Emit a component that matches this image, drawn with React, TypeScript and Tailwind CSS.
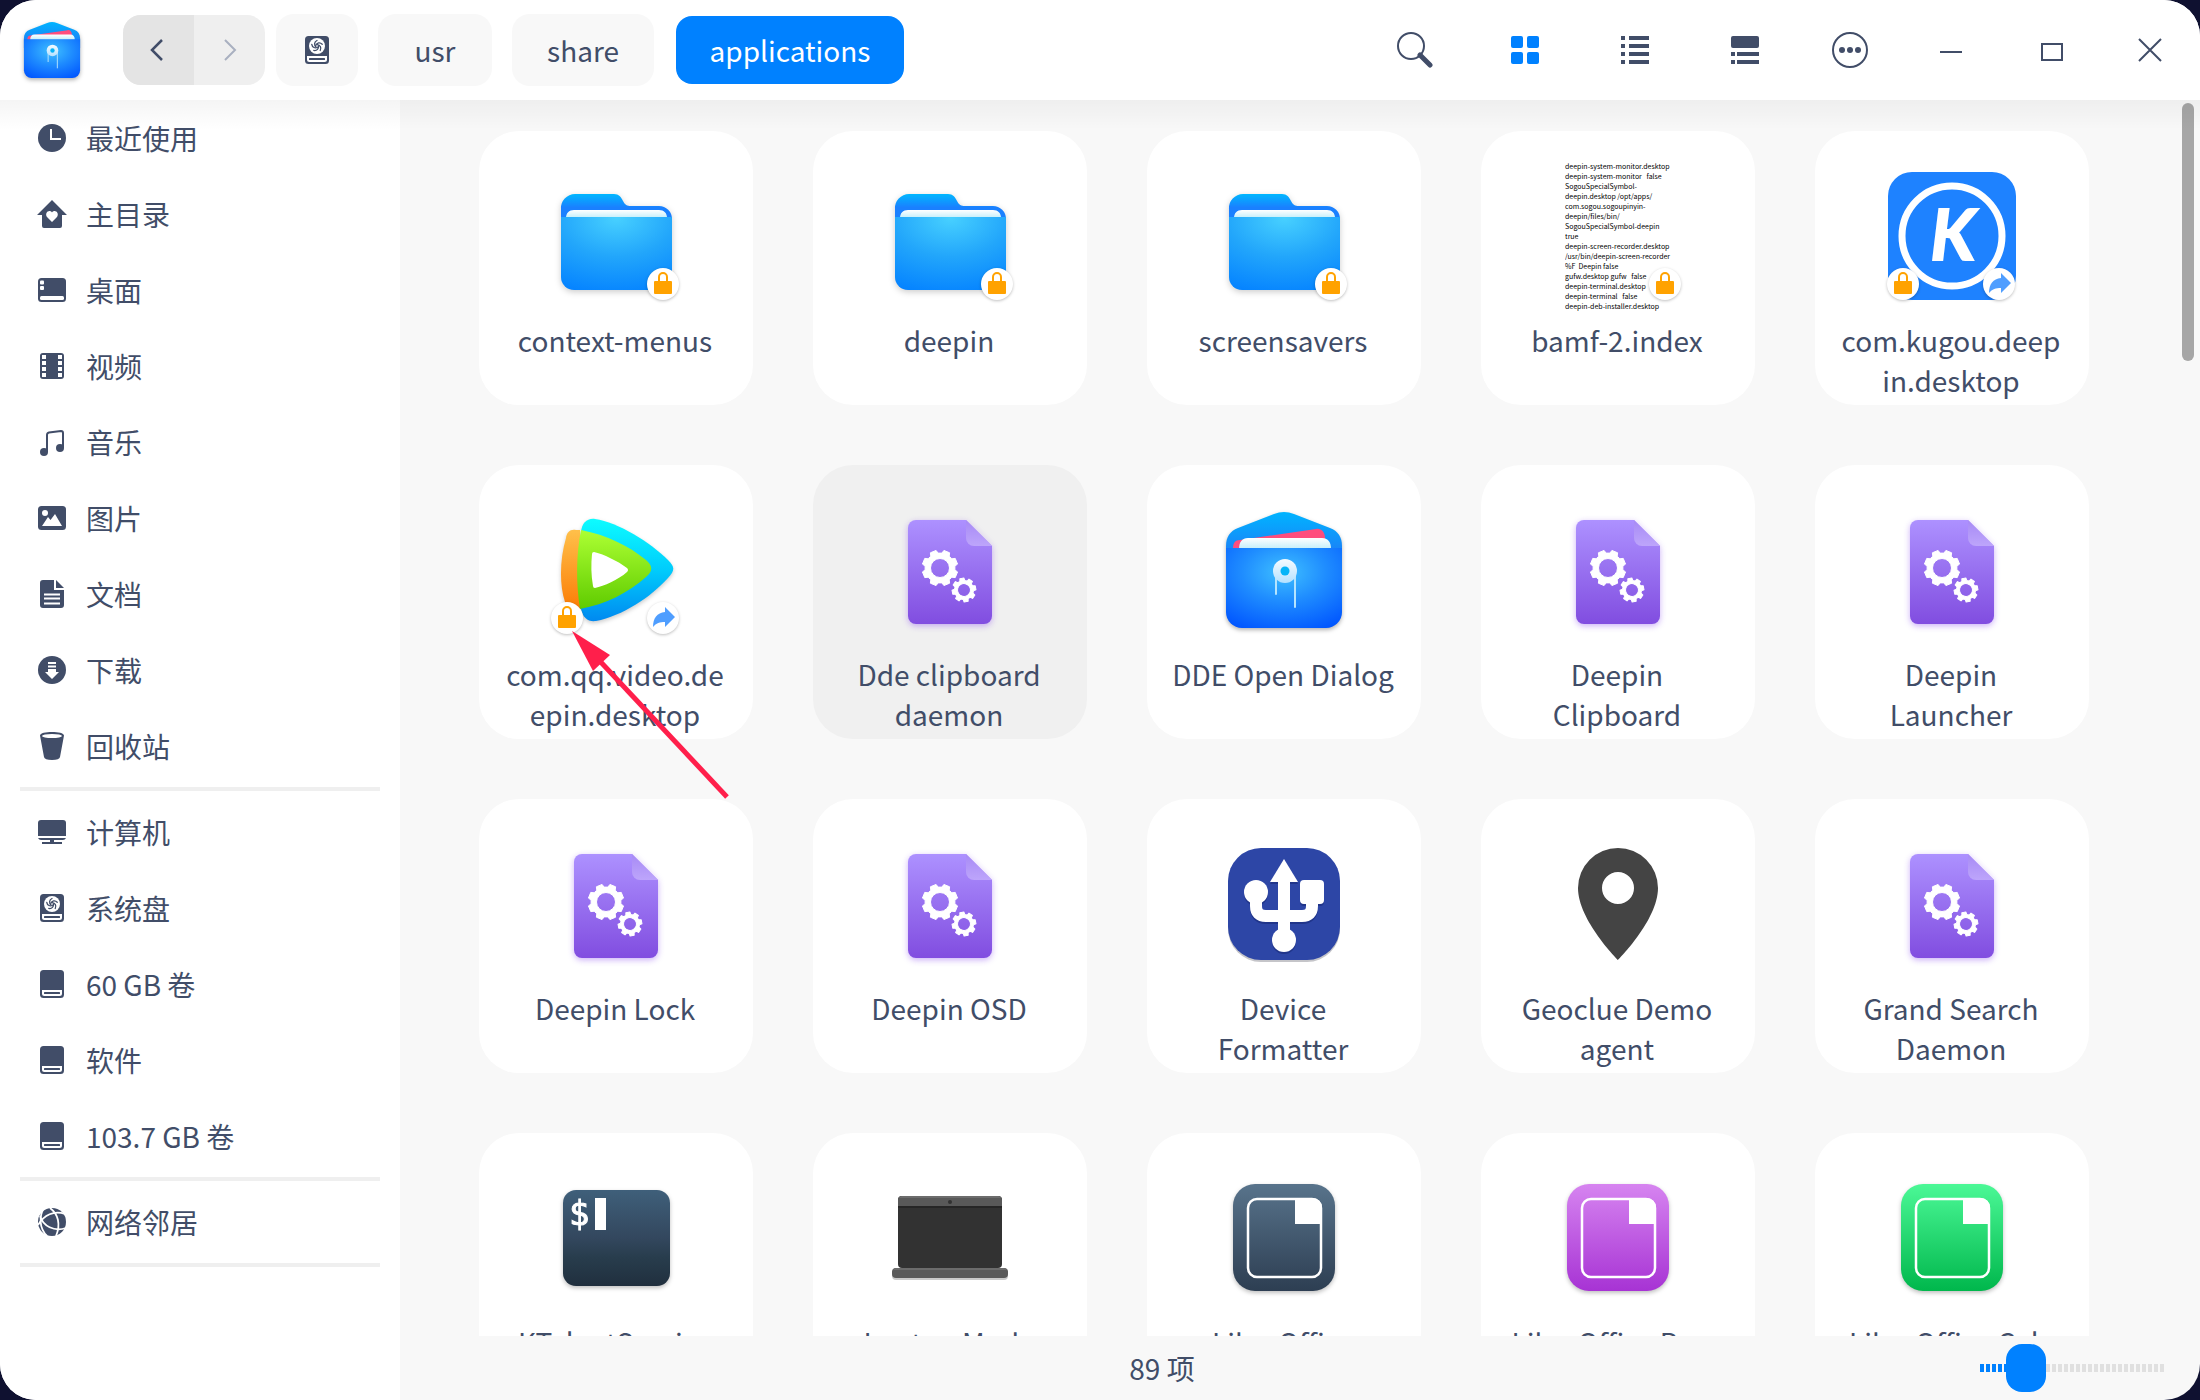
import React, { useState } from "react";

const INK = "#414d68";

/* ---------- shared gradients ---------- */

function Gradient({ id, stops }: { id: string; stops: [number, string][] }) {
  return (
    <linearGradient id={id} x1="0" y1="0" x2="0" y2="1">
      {stops.map(([o, c]) => (
        <stop key={o} offset={o} stopColor={c} />
      ))}
    </linearGradient>
  );
}

function Gradients() {
  return (
    <svg width="0" height="0" className="absolute" aria-hidden="true">
      <defs>
        <Gradient id="folderBack" stops={[[0, "#00b7ff"], [0.3, "#1a80ff"], [1, "#1a80ff"]]} />
        <radialGradient id="folderFront" cx="0.5" cy="0.02" r="1.05">
          <stop offset="0" stopColor="#47d0ff" />
          <stop offset="0.5" stopColor="#22a6fb" />
          <stop offset="1" stopColor="#0583ff" />
        </radialGradient>
        <Gradient id="paper" stops={[[0, "#ffffff"], [1, "#c2eefa"]]} />
        <Gradient id="flap" stops={[[0, "#00b4ff"], [1, "#2470f5"]]} />
        <radialGradient id="pouch" cx="0.5" cy="0.3" r="0.8">
          <stop offset="0" stopColor="#3fc0ff" />
          <stop offset="0.45" stopColor="#1f8dff" />
          <stop offset="1" stopColor="#0055ff" />
        </radialGradient>
        <Gradient id="button" stops={[[0, "#f5fbff"], [1, "#b5e1ff"]]} />
        <Gradient id="violet" stops={[[0, "#ad91ff"], [1, "#814de0"]]} />
        <Gradient id="fold" stops={[[0, "#a78af5"], [1, "#bda5fb"]]} />
        <Gradient id="qqCyan" stops={[[0, "#0dfcff"], [0.5, "#00ccfc"], [1, "#0089f0"]]} />
        <Gradient id="qqGreen" stops={[[0, "#adff33"], [1, "#5fcb00"]]} />
        <Gradient id="qqOrange" stops={[[0, "#ffc04a"], [1, "#fb7c06"]]} />
        <Gradient id="shell" stops={[[0, "#3f5f7a"], [0.5, "#33475e"], [0.7, "#283d4d"], [1, "#202f3e"]]} />
        <Gradient id="officeSlate" stops={[[0, "#58738b"], [1, "#2d3e52"]]} />
        <Gradient id="officePurple" stops={[[0, "#d684f0"], [1, "#a733d4"]]} />
        <Gradient id="officeGreen" stops={[[0, "#4bf896"], [1, "#00b74c"]]} />
      </defs>
    </svg>
  );
}

/* ---------- file icons (128 x 128) ---------- */

function Art({ children, className = "size-32" }: { children: React.ReactNode; className?: string }) {
  return (
    <svg viewBox="0 0 128 128" className={`${className} overflow-visible`} aria-hidden="true">
      {children}
    </svg>
  );
}

function FolderIcon() {
  return (
    <Art className="size-32 drop-shadow-[0_2px_3px_rgba(0,0,0,0.2)]">
      <path d="M9 60V37a14 14 0 0 1 14-15h39c5 0 7 3 9 7s4 5 8 5h28a13 13 0 0 1 13 13v20z" fill="url(#folderBack)" />
      <path d="M14 46c0-5 3-8 8-8h85c5 0 8 3 8 8z" fill="url(#paper)" />
      <path d="M9 45h111v60a13 13 0 0 1-13 13H22a13 13 0 0 1-13-13z" fill="url(#folderFront)" />
    </Art>
  );
}

function PouchIcon({ className = "size-32" }: { className?: string }) {
  return (
    <Art className={`${className} drop-shadow-[0_2px_2px_rgba(0,0,0,0.3)]`}>
      <path d="M6 60V40c0-9 4-15 12-18L54 8q10-4 20 0l36 14c8 3 12 9 12 18v20z" fill="url(#flap)" />
      <path d="M13 43c0-6 2-9 7-9l76-11c5-1 9 3 9 9v11z" fill="#ff4d7d" />
      <path d="M19 43c0-7 3-11 9-11h74c6 0 9 4 9 11z" fill="url(#paper)" />
      <path d="M6 42h116v64a16 16 0 0 1-16 16H22a16 16 0 0 1-16-16z" fill="url(#pouch)" />
      <path d="M56 66v22M75 66v35" stroke="#b5e4ff" strokeWidth="2" strokeLinecap="round" />
      <circle cx="65" cy="65" r="12" fill="url(#button)" />
      <circle cx="65" cy="65" r="4.5" fill="#06b4f8" />
    </Art>
  );
}

function gearPath(cx: number, cy: number, outer: number, root: number, hole: number, teeth: number) {
  const step = (Math.PI * 2) / teeth;
  const at = (r: number, a: number) => `${(cx + r * Math.cos(a)).toFixed(2)} ${(cy + r * Math.sin(a)).toFixed(2)}`;
  let d = "";
  for (let i = 0; i < teeth; i++) {
    const a = i * step + step / 2 - Math.PI / 2;
    d += `${i ? "L" : "M"}${at(root, a - step * 0.34)}L${at(outer, a - step * 0.22)}L${at(outer, a + step * 0.22)}L${at(root, a + step * 0.34)}`;
  }
  return `${d}ZM${cx - hole} ${cy}a${hole} ${hole} 0 1 0 ${hole * 2} 0a${hole} ${hole} 0 1 0 ${-hole * 2} 0Z`;
}

function GearFileIcon() {
  return (
    <Art className="size-32 drop-shadow-[0_2px_3px_rgba(140,80,240,0.45)]">
      <path d="M30 14h50l26 26v70a8 8 0 0 1-8 8H30a8 8 0 0 1-8-8V22a8 8 0 0 1 8-8z" fill="url(#violet)" />
      <path d="M80 14l26 26H88a8 8 0 0 1-8-8z" fill="url(#fold)" />
      <g fill="#fff" stroke="#fff" strokeWidth="1" strokeLinejoin="round" fillRule="evenodd">
        <path d={gearPath(54, 62, 18, 15, 9.5, 8)} />
        <path d={gearPath(78, 84, 12, 9.5, 6.5, 8)} transform="rotate(12 78 84)" />
      </g>
    </Art>
  );
}

function KugouIcon() {
  return (
    <Art>
      <rect width="128" height="128" rx="24" fill="#1e82ff" />
      <circle cx="64" cy="64" r="50" fill="none" stroke="#fff" strokeWidth="7" />
      <text x="65" y="88" textAnchor="middle" fill="#fff" stroke="#fff" strokeWidth="2" fontSize="70" fontWeight="700" fontStyle="italic" fontFamily="Lato, sans-serif">
        K
      </text>
    </Art>
  );
}

function QQVideoIcon() {
  return (
    <Art className="size-32 drop-shadow-[0_2px_2px_rgba(0,0,0,0.2)]">
      <path d="M24 24c-6-1-9 2-10 8-6 20-7 46-1 64 2 8 6 9 15 7V24z" fill="url(#qqOrange)" />
      <path d="M29 26c1-9 6-14 14-13 23 3 56 24 73 41 7 7 7 10 0 18-17 19-46 38-72 43-8 1-13-3-15-12z" fill="url(#qqCyan)" />
      <path d="M29 24c26 5 48 16 65 30 7 6 7 11 0 17-18 16-40 27-66 32-4-26-4-54 1-79z" fill="url(#qqGreen)" />
      <path d="M42 46c9 2 24 9 33 16q2 2 0 4c-9 8-23 14-32 16q-2 0-2-2c-2-11-2-22-1-32q0-2 2-2z" fill="#fff" />
    </Art>
  );
}

function UsbIcon() {
  return (
    <Art>
      <rect x="8" y="10" width="112" height="112" rx="33" fill="#c5c5c9" />
      <rect x="8" y="8" width="112" height="112" rx="33" fill="#2d46a6" />
      {["#20358a", "#ffffff"].map((c, i) => (
        <g key={c} fill={c} transform={i === 0 ? "translate(0 2)" : undefined}>
          <path d="M64 19l14 23H50z" />
          <rect x="58" y="40" width="12" height="54" />
          <circle cx="36" cy="52" r="12" />
          <rect x="80" y="40" width="24" height="24" rx="4" />
          <circle cx="64" cy="100" r="12" />
          <path d="M36 58v8q0 10 10 10h36q10 0 10-10v-8" fill="none" stroke={c} strokeWidth="12" />
        </g>
      ))}
    </Art>
  );
}

function PinIcon() {
  return (
    <Art>
      <path fillRule="evenodd" d="M64 8a40 40 0 0 0-40 40c0 32 40 72 40 72s40-40 40-72A40 40 0 0 0 64 8zm0 24a16 16 0 1 1 0 32 16 16 0 0 1 0-32z" fill="#444" />
    </Art>
  );
}

function TerminalIcon() {
  return (
    <Art className="size-32 drop-shadow-[0_2px_2px_rgba(0,0,0,0.25)]">
      <rect x="11" y="16" width="107" height="96" rx="13" fill="url(#shell)" />
      <text x="17" y="51" fill="#fff" stroke="#fff" strokeWidth="1" fontSize="34" fontFamily="DejaVu Sans Mono, monospace">
        $
      </text>
      <rect x="43" y="24" width="11" height="32" fill="#fff" />
    </Art>
  );
}

function LaptopIcon() {
  return (
    <Art>
      <rect x="12" y="22" width="104" height="72" rx="4" fill="#323232" />
      <path d="M12 32v-6a4 4 0 0 1 4-4h96a4 4 0 0 1 4 4v6z" fill="#595959" />
      <path d="M13 24q1-2 3-2h96q2 0 3 2z" fill="#6c6c6c" />
      <rect x="12" y="32" width="104" height="2" fill="#262626" />
      <circle cx="64" cy="28" r="2" fill="#323232" />
      <rect x="6" y="96" width="116" height="10" rx="4" fill="#c9c9c9" />
      <rect x="6" y="94" width="116" height="10" rx="4" fill="#595959" />
      <path d="M7 96q1-2 3-2h108q2 0 3 2z" fill="#6c6c6c" />
    </Art>
  );
}

function OfficeIcon({ fill }: { fill: string }) {
  return (
    <Art className="size-32 drop-shadow-[0_2px_2px_rgba(0,0,0,0.25)]">
      <rect x="13" y="10" width="102" height="107" rx="22" fill={fill} />
      <rect x="28" y="25" width="73" height="78" rx="9" fill="none" stroke="#fff" strokeWidth="2.5" />
      <path d="M75 24h18a9 9 0 0 1 9 9v17H75z" fill="#fff" />
    </Art>
  );
}

const previewLines = [
  "deepin-system-monitor.desktop",
  "deepin-system-monitor   false",
  "SogouSpecialSymbol-",
  "deepin.desktop /opt/apps/",
  "com.sogou.sogoupinyin-",
  "deepin/files/bin/",
  "SogouSpecialSymbol-deepin",
  "true",
  "deepin-screen-recorder.desktop",
  "/usr/bin/deepin-screen-recorder",
  "%F  Deepin false",
  "gufw.desktop gufw   false",
  "deepin-terminal.desktop",
  "deepin-terminal   false",
  "deepin-deb-installer.desktop",
];

function TextPreview() {
  return (
    <div className="w-[106px] shrink-0 overflow-hidden text-left text-[7px] leading-[10px] whitespace-pre text-black">
      {previewLines.map((l) => (
        <div key={l}>{l}</div>
      ))}
    </div>
  );
}

/* ---------- emblems ---------- */

function Emblem({ kind, side }: { kind: "lock" | "link"; side: "left" | "right" }) {
  return (
    <span className={`absolute bottom-0 size-8 rounded-full bg-white shadow-[0_1px_3px_rgba(0,0,0,0.25)] ${side === "left" ? "-left-px" : "right-px"}`}>
      <svg viewBox="0 0 32 32" className="size-8" aria-hidden="true">
        {kind === "lock" ? (
          <>
            <path d="M12 14V9a4 4 0 0 1 8 0v5" fill="none" stroke="#ffa200" strokeWidth="2" />
            <rect x="7" y="13" width="18" height="13" rx="1" fill="#ffa200" />
          </>
        ) : (
          <path d="M18 5l10 10-10 10v-5c-5 0-9 1-12 5 0-9 4-14 12-15z" fill="#4f9eff" />
        )}
      </svg>
    </span>
  );
}

/* ---------- sidebar icons (28 x 28) ---------- */

function DriveBody() {
  return (
    <>
      <rect x="2" y="0" width="24" height="28" rx="3.5" fill={INK} />
      <path d="M4 20h20v3.500a2.500 2.500 0 0 1-2.500 2.500h-15A2.500 2.500 0 0 1 4 23.500z" fill="#fff" />
      <rect x="6" y="22" width="16" height="2" rx="0.5" fill={INK} />
    </>
  );
}

const glyphs: Record<string, React.ReactNode> = {
  recent: (
    <>
      <circle cx="14" cy="14" r="14" fill={INK} />
      <path d="M13 5v10h10" fill="none" stroke="#fff" strokeWidth="2" />
    </>
  ),
  home: (
    <>
      <path d="M14 0l15 15h-5v11a2 2 0 0 1-2 2H6a2 2 0 0 1-2-2V15h-5z" fill={INK} />
      <path d="M14 22l-5-5c-2-3 0-6 2.500-6 1 0 2 .5 2.500 1.500.5-1 1.500-1.500 2.500-1.500 2.500 0 4.500 3 2.500 6z" fill="#fff" />
    </>
  ),
  desktop: (
    <>
      <rect y="2" width="28" height="24" rx="3.500" fill={INK} />
      <rect x="2" y="4.500" width="4" height="4" rx="1" fill="#fff" />
      <rect x="2" y="10" width="4" height="4" rx="1" fill="#fff" />
      <rect x="2" y="20" width="24" height="4" rx="1.500" fill="#fff" />
    </>
  ),
  video: (
    <>
      <rect x="2" y="1" width="24" height="26" rx="3" fill={INK} />
      {[3, 9, 15, 21].map((y) => (
        <g key={y} fill="#fff">
          <rect x="4" y={y} width="4" height="4" />
          <rect x="20" y={y} width="4" height="4" />
        </g>
      ))}
    </>
  ),
  music: (
    <>
      <path d="M9 24V7q0-2 2-2.500L23 3q2 0 2 2v15" fill="none" stroke={INK} strokeWidth="2" />
      <circle cx="6" cy="24" r="4" fill={INK} />
      <circle cx="22" cy="20" r="4" fill={INK} />
    </>
  ),
  picture: (
    <>
      <rect y="2" width="28" height="24" rx="3.500" fill={INK} />
      <circle cx="7" cy="9" r="3" fill="#fff" />
      <path d="M4 22l6-9 2.500 3L17 10l7 12z" fill="#fff" />
    </>
  ),
  document: (
    <>
      <path d="M5 0h11v10h10v15a3 3 0 0 1-3 3H5a3 3 0 0 1-3-3V3a3 3 0 0 1 3-3z" fill={INK} />
      <path d="M18 0l8 8h-8z" fill={INK} />
      <path d="M6 14.500h16M6 18.500h16M6 23.500h16" stroke="#fff" strokeWidth="2" />
    </>
  ),
  download: (
    <>
      <circle cx="14" cy="14" r="14" fill={INK} />
      <path d="M10 6h8v2h-8zM10 9.500h8v2h-8zM10 13h8v3h3l-7 7-7-7h3z" fill="#fff" />
    </>
  ),
  trash: (
    <>
      <path d="M2 3.500C2 1 8 0 14 0s12 1 12 3.500L22 25q-.5 3-8 3t-8-3z" fill={INK} />
      <ellipse cx="14" cy="4" rx="10" ry="2" fill="#fff" />
    </>
  ),
  computer: (
    <>
      <path d="M3 2h22a3 3 0 0 1 3 3v13H0V5a3 3 0 0 1 3-3z" fill={INK} />
      <path d="M0 20h28q-1 2-3 2h-9v2h8v2H4v-2h8v-2H3q-2 0-3-2z" fill={INK} />
    </>
  ),
  system: (
    <>
      <DriveBody />
      <circle cx="14" cy="10" r="8" fill="#fff" />
      <g fill="none" stroke={INK} strokeWidth="1.300" strokeLinecap="round">
        {[0, 72, 144, 216, 288].map((a) => (
          <path key={a} d="M13 11c-2-2-2-5 1-6.500" transform={`rotate(${a} 14 10)`} />
        ))}
      </g>
    </>
  ),
  drive: <DriveBody />,
  network: (
    <>
      <circle cx="14" cy="14" r="14" fill={INK} />
      <g fill="none" stroke="#fff" strokeWidth="1.800">
        <path d="M6 0C1 8 1 20 9 28" />
        <path d="M12 0c8 6 11 16 6 28" />
        <path d="M0 17C6 7 16 2 27 6" />
        <path d="M2 8c3 10 14 16 26 12" />
      </g>
    </>
  ),
};

function SideIcon({ name }: { name: string }) {
  return (
    <svg viewBox="0 0 28 28" className="size-7 shrink-0 overflow-visible" aria-hidden="true">
      {glyphs[name]}
    </svg>
  );
}

const sections: [string, string][][] = [
  [
    ["recent", "最近使用"],
    ["home", "主目录"],
    ["desktop", "桌面"],
    ["video", "视频"],
    ["music", "音乐"],
    ["picture", "图片"],
    ["document", "文档"],
    ["download", "下载"],
    ["trash", "回收站"],
  ],
  [
    ["computer", "计算机"],
    ["system", "系统盘"],
    ["drive", "60 GB 卷"],
    ["drive", "软件"],
    ["drive", "103.7 GB 卷"],
  ],
  [["network", "网络邻居"]],
];

function Sidebar() {
  return (
    <nav className="w-[400px] shrink-0 overflow-hidden bg-white">
      {sections.map((items, i) => (
        <div key={i}>
          <ul>
            {items.map(([icon, label]) => (
              <li key={label}>
                <a href="#" className="flex h-[76px] items-center gap-5 pl-[38px] text-[28px] leading-10">
                  <SideIcon name={icon} />
                  {label}
                </a>
              </li>
            ))}
          </ul>
          <hr className="mx-5 my-[3px] h-1 border-0 bg-[#efefef]" />
        </div>
      ))}
    </nav>
  );
}

/* ---------- title bar ---------- */

function ToolButton({ label, wide, children }: { label: string; wide?: boolean; children: React.ReactNode }) {
  return (
    <button aria-label={label} className={`flex h-full items-center justify-center ${wide ? "w-[110px]" : "w-[100px]"}`}>
      <svg viewBox="0 0 36 36" className="size-9" fill="none" stroke={INK} strokeWidth="2" aria-hidden="true">
        {children}
      </svg>
    </button>
  );
}

function TitleBar() {
  return (
    <header className="flex h-[100px] shrink-0 items-center justify-between bg-white pl-[21px]">
      <div className="flex items-center text-[28px] leading-10">
        <PouchIcon className="size-[62px]" />
        <div className="ml-10 flex h-[70px] overflow-hidden rounded-[18px] bg-[#efefef]">
          <button aria-label="后退" className="flex w-[71px] items-center justify-center bg-[#e4e4e4] pr-1">
            <svg viewBox="0 0 14 22" className="h-[22px] w-[14px]" fill="none" stroke={INK} strokeWidth="2.500" aria-hidden="true">
              <path d="M12 1L2 11l10 10" />
            </svg>
          </button>
          <button aria-label="前进" className="flex w-[71px] items-center justify-center">
            <svg viewBox="0 0 14 22" className="h-[22px] w-[14px]" fill="none" stroke="#a9b0c0" strokeWidth="2" aria-hidden="true">
              <path d="M2 1l10 10L2 21" />
            </svg>
          </button>
        </div>
        <button aria-label="系统盘" className="ml-[11px] flex h-[72px] w-[82px] items-center justify-center rounded-[18px] bg-[#f8f8f8]">
          <SideIcon name="system" />
        </button>
        <button className="ml-5 h-[72px] w-[114px] rounded-[18px] bg-[#f8f8f8]">usr</button>
        <button className="ml-5 h-[72px] w-[142px] rounded-[18px] bg-[#f8f8f8]">share</button>
        <button className="ml-[22px] h-[68px] w-[228px] rounded-2xl bg-[#0081ff] text-white">applications</button>
      </div>
      <div className="flex h-full items-center">
        <ToolButton label="搜索" wide>
          <circle cx="14" cy="14" r="13" />
          <path d="M23 23l10 10" strokeWidth="5" strokeLinecap="round" />
        </ToolButton>
        <ToolButton label="图标视图" wide>
          <g fill="#0081ff" stroke="none">
            <rect x="4" y="4" width="12" height="12" rx="2" />
            <rect x="20" y="4" width="12" height="12" rx="2" />
            <rect x="4" y="20" width="12" height="12" rx="2" />
            <rect x="20" y="20" width="12" height="12" rx="2" />
          </g>
        </ToolButton>
        <ToolButton label="列表视图" wide>
          <path d="M4 6h4M12 6h20M4 14h4M12 14h20M4 22h4M12 22h20M4 30h4M12 30h20" strokeWidth="4" />
        </ToolButton>
        <ToolButton label="分栏视图" wide>
          <rect x="4" y="4" width="28" height="12" rx="2" fill={INK} stroke="none" />
          <path d="M4 22h4M10 22h22M4 30h4M10 30h22" strokeWidth="4" />
        </ToolButton>
        <ToolButton label="更多">
          <circle cx="18" cy="18" r="17" />
          <g fill={INK} stroke="none">
            <circle cx="10" cy="18" r="3" />
            <circle cx="18" cy="18" r="3" />
            <circle cx="26" cy="18" r="3" />
          </g>
        </ToolButton>
        <ToolButton label="最小化">
          <path d="M8 20h22" />
        </ToolButton>
        <ToolButton label="最大化">
          <rect x="10" y="12" width="20" height="16" />
        </ToolButton>
        <ToolButton label="关闭">
          <path d="M7 7l22 22M29 7L7 29" />
        </ToolButton>
      </div>
    </header>
  );
}

/* ---------- file grid ---------- */

type Item = {
  label: string;
  icon: React.ReactNode;
  lock?: "left" | "right";
  link?: boolean;
  hovered?: boolean;
  arrow?: boolean;
};

const items: Item[] = [
  { label: "context-menus", icon: <FolderIcon />, lock: "right" },
  { label: "deepin", icon: <FolderIcon />, lock: "right" },
  { label: "screensavers", icon: <FolderIcon />, lock: "right" },
  { label: "bamf-2.index", icon: <TextPreview />, lock: "right" },
  { label: "com.kugou.deep\nin.desktop", icon: <KugouIcon />, lock: "left", link: true },
  { label: "com.qq.video.de\nepin.desktop", icon: <QQVideoIcon />, lock: "left", link: true, arrow: true },
  { label: "Dde clipboard\ndaemon", icon: <GearFileIcon />, hovered: true },
  { label: "DDE Open Dialog", icon: <PouchIcon /> },
  { label: "Deepin\nClipboard", icon: <GearFileIcon /> },
  { label: "Deepin\nLauncher", icon: <GearFileIcon /> },
  { label: "Deepin Lock", icon: <GearFileIcon /> },
  { label: "Deepin OSD", icon: <GearFileIcon /> },
  { label: "Device\nFormatter", icon: <UsbIcon /> },
  { label: "Geoclue Demo\nagent", icon: <PinIcon /> },
  { label: "Grand Search\nDaemon", icon: <GearFileIcon /> },
  { label: "KTelnetService", icon: <TerminalIcon /> },
  { label: "Laptop Mode\nTools", icon: <LaptopIcon /> },
  { label: "LibreOffice", icon: <OfficeIcon fill="url(#officeSlate)" /> },
  { label: "LibreOffice Base", icon: <OfficeIcon fill="url(#officePurple)" /> },
  { label: "LibreOffice Calc", icon: <OfficeIcon fill="url(#officeGreen)" /> },
];

function FileCard({ item }: { item: Item }) {
  return (
    <li className="relative">
      <button className={`flex h-[274px] w-full flex-col items-center rounded-[40px] pt-[41px] ${item.hovered ? "bg-[#f0f0f0]" : "bg-white"}`}>
        <span className="relative flex size-32 items-center justify-center">
          {item.icon}
          {item.lock && <Emblem kind="lock" side={item.lock} />}
          {item.link && <Emblem kind="link" side="right" />}
        </span>
        <span className="mt-5 pr-0.5 text-[28px] leading-10 whitespace-pre">{item.label}</span>
      </button>
      {item.arrow && (
        <svg viewBox="0 0 274 340" className="pointer-events-none absolute top-0 left-0 z-10 h-[340px] w-[274px]" aria-hidden="true">
          <path d="M118 193L248 332" stroke="#ff1f4b" strokeWidth="5" />
          <path d="M93 166l38 24-17 16z" fill="#ff1f4b" />
        </svg>
      )}
    </li>
  );
}

function ZoomSlider() {
  const [size, setSize] = useState(18);
  return (
    <div className="relative flex w-[184px] items-center">
      <div className="flex gap-[2px]" aria-hidden="true">
        {Array.from({ length: 31 }, (_, i) => (
          <span key={i} className={`h-2 w-1 ${i < (size / 100) * 31 ? "bg-[#0081ff]" : "bg-[#e0e0e0]"}`} />
        ))}
      </div>
      <input
        type="range"
        aria-label="图标大小"
        value={size}
        onChange={(e) => setSize(Number(e.target.value))}
        className="absolute inset-x-0 m-0 h-12 w-full appearance-none bg-transparent [&::-webkit-slider-thumb]:h-12 [&::-webkit-slider-thumb]:w-10 [&::-webkit-slider-thumb]:appearance-none [&::-webkit-slider-thumb]:rounded-2xl [&::-webkit-slider-thumb]:bg-[#0081ff]"
      />
    </div>
  );
}

export default function App() {
  return (
    <div className="h-screen bg-[#0f1130] font-['Noto_Sans_CJK_SC',sans-serif] text-[#414d68]">
      <Gradients />
      <div className="flex h-full flex-col overflow-hidden rounded-[36px] bg-[#f8f8f8]">
        <TitleBar />
        <div className="relative flex min-h-0 flex-1">
          <Sidebar />
          <main className="flex min-w-0 flex-1 flex-col">
            <div className="relative min-h-0 flex-1 overflow-hidden">
              <ul className="grid grid-cols-[repeat(auto-fill,274px)] gap-[60px] px-[79px] pt-[31px]">
                {items.map((item) => (
                  <FileCard key={item.label} item={item} />
                ))}
              </ul>
              <div className="absolute top-[3px] right-1.5 h-[258px] w-3 rounded-full bg-[#a6a6a6]" />
            </div>
            <footer className="flex h-16 shrink-0 items-center pr-9">
              <p className="flex-1 text-center text-[28px] leading-10">89 项</p>
              <div className="pl-14">
                <ZoomSlider />
              </div>
            </footer>
          </main>
          <div className="pointer-events-none absolute inset-x-0 top-0 h-[30px] bg-linear-to-b from-black/4 to-transparent" />
        </div>
      </div>
    </div>
  );
}
